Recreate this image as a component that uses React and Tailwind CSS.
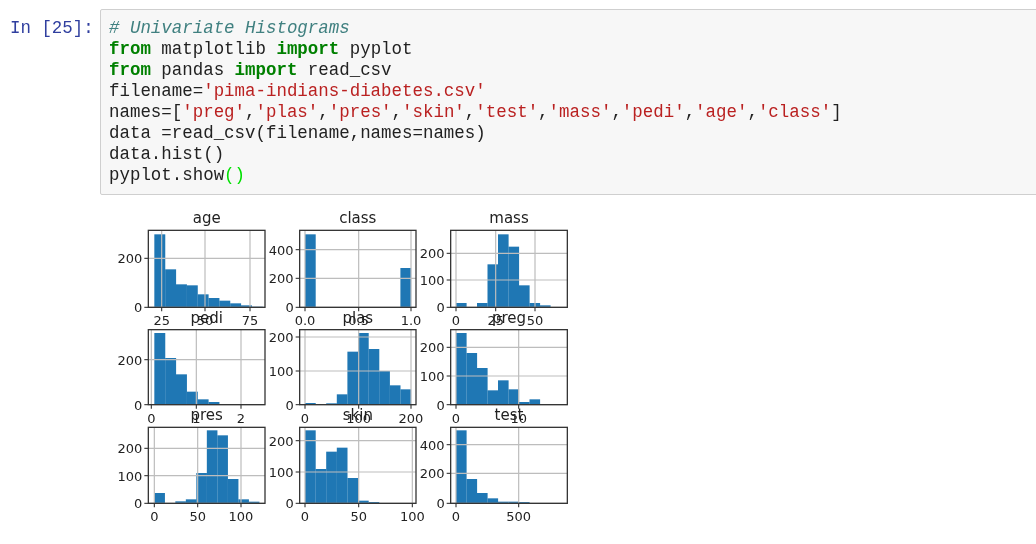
import React from 'react';

// all chart numbers are measured on a 3x crop, hence the /3 below
const charts = [
  { title: 'age', ox: 110, oy: 205, box: [115, 465, 73, 304], start: 133, w: 32.5,
    tops: [85, 190, 235, 238, 265, 276, 284, 292, 298, 302],
    xt: [['25', 155], ['50', 285], ['75', 420]], yt: [['200', 157], ['0', 304]] },
  { title: 'class', ox: 110, oy: 205, box: [569, 918, 73, 304], start: 585, w: 31.8,
    tops: [85, 304, 304, 304, 304, 304, 304, 304, 304, 186],
    xt: [['0.0', 585], ['0.5', 746], ['1.0', 903]], yt: [['400', 131], ['200', 217], ['0', 304]] },
  { title: 'mass', ox: 340, oy: 205, box: [332, 682, 73, 304], start: 348, w: 31.5,
    tops: [291, 304, 291, 175, 85, 122, 238, 291, 298, 303],
    xt: [['0', 348], ['25', 467], ['50', 585]], yt: [['200', 142], ['100', 222], ['0', 304]] },
  { title: 'pedi', ox: 110, oy: 305, box: [115, 465, 71, 296], start: 133, w: 32.5,
    tops: [81, 156, 205, 257, 280, 288, 296, 296, 296, 295],
    xt: [['0', 124], ['1', 259], ['2', 393]], yt: [['200', 161], ['0', 296]] },
  { title: 'plas', ox: 110, oy: 305, box: [569, 918, 71, 296], start: 585, w: 31.8,
    tops: [291, 296, 292, 265, 137, 81, 129, 195, 238, 250],
    xt: [['0', 585], ['100', 746], ['200', 903]], yt: [['200', 93], ['100', 195], ['0', 296]] },
  { title: 'preg', ox: 340, oy: 305, box: [332, 682, 71, 296], start: 348, w: 31.5,
    tops: [81, 141, 186, 253, 223, 250, 288, 280, 296, 296],
    xt: [['0', 348], ['10', 536]], yt: [['200', 124], ['100', 210], ['0', 296]] },
  { title: 'pres', ox: 110, oy: 404, box: [115, 465, 67, 295], start: 133, w: 31.5,
    tops: [264, 295, 289, 283, 204, 76, 91, 222, 283, 290],
    xt: [['0', 133], ['50', 263], ['100', 393]], yt: [['200', 130], ['100', 212], ['0', 295]] },
  { title: 'skin', ox: 110, oy: 404, box: [569, 918, 67, 295], start: 585, w: 31.8,
    tops: [76, 192, 140, 128, 219, 287, 291, 295, 295, 295],
    xt: [['0', 585], ['50', 746], ['100', 907]], yt: [['200', 107], ['100', 201], ['0', 295]] },
  { title: 'test', ox: 340, oy: 404, box: [332, 682, 67, 295], start: 348, w: 31.5,
    tops: [76, 222, 264, 280, 290, 290, 291, 295, 295, 295],
    xt: [['0', 348], ['500', 536]], yt: [['400', 119], ['200', 205], ['0', 295]] },
];

const Hist = ({ c }) => {
  const [l, r, t, b] = c.box;
  const px = (v) => c.ox + v / 3;
  const py = (v) => c.oy + v / 3;
  const font = { fontFamily: 'DejaVu Sans, sans-serif' };
  return (
    <g style={font}>
      <rect x={px(l)} y={py(t)} width={(r - l) / 3} height={(b - t) / 3} fill="#fff" />
      {c.tops.map((top, i) => (
        top < b && (
          <rect key={i} x={px(c.start + i * c.w)} y={py(top)} width={c.w / 3 + 0.1} height={(b - top) / 3} fill="#1f77b4" />
        )
      ))}
      {/* grid sits over the bars */}
      {c.xt.map(([label, x]) => (
        <line key={label} x1={px(x)} x2={px(x)} y1={py(t)} y2={py(b)} stroke="#bdbdbd" strokeWidth="1.2" />
      ))}
      {c.yt.map(([label, y]) => (
        <line key={label} x1={px(l)} x2={px(r)} y1={py(y)} y2={py(y)} stroke="#bdbdbd" strokeWidth="1.2" />
      ))}
      <rect x={px(l)} y={py(t)} width={(r - l) / 3} height={(b - t) / 3} fill="none" stroke="#333" strokeWidth="1.3" />
      {c.xt.map(([label, x]) => (
        <g key={label}>
          <line x1={px(x)} x2={px(x)} y1={py(b)} y2={py(b) + 4} stroke="#333" strokeWidth="1.1" />
          <text x={px(x)} y={py(b) + 18} textAnchor="middle" fontSize="13" fill="#222">{label}</text>
        </g>
      ))}
      {c.yt.map(([label, y]) => (
        <g key={label}>
          <line x1={px(l) - 4} x2={px(l)} y1={py(y)} y2={py(y)} stroke="#333" strokeWidth="1.1" />
          <text x={px(l) - 6} y={py(y) + 5} textAnchor="end" fontSize="13" fill="#222">{label}</text>
        </g>
      ))}
      <text x={(px(l) + px(r)) / 2} y={py(t) - 7} textAnchor="middle" fontSize="15" fill="#222">{c.title}</text>
    </g>
  );
};

const Kw = ({ children }) => <span className="font-bold text-[#008000]">{children}</span>;
const Str = ({ children }) => <span className="text-[#ba2121]">{children}</span>;

const App = () => {
  return (
    <div className="w-[1036px] h-[544px] overflow-hidden bg-white font-['Liberation_Mono',monospace] text-[17.45px] leading-[21px] text-[#222]">
      <div className="flex pt-[9px]">
        <div className="w-[100px] shrink-0 pl-[10px] pt-[9px] text-[#303f9f] blur-[0.25px]">In&nbsp;[25]:</div>
        <div className="flex-1 mr-[-4px] bg-[#f7f7f7] border border-[#cfcfcf] rounded-[2px] px-2 py-2 whitespace-pre">
          <div className="blur-[0.25px]">
            <div className="italic text-[#408080]"># Univariate Histograms</div>
            <div><Kw>from</Kw> matplotlib <Kw>import</Kw> pyplot</div>
            <div><Kw>from</Kw> pandas <Kw>import</Kw> read_csv</div>
            <div>filename=<Str>'pima-indians-diabetes.csv'</Str></div>
            <div>names=[<Str>'preg'</Str>,<Str>'plas'</Str>,<Str>'pres'</Str>,<Str>'skin'</Str>,<Str>'test'</Str>,<Str>'mass'</Str>,<Str>'pedi'</Str>,<Str>'age'</Str>,<Str>'class'</Str>]</div>
            <div>data =read_csv(filename,names=names)</div>
            <div>data.hist()</div>
            <div>pyplot.show<span className="text-[#00e000]">()</span></div>
          </div>
        </div>
      </div>

      {/* matplotlib output */}
      <svg viewBox="100 205 480 330" width="480" height="330" className="block ml-[100px] mt-[11px] blur-[0.5px]">
        {charts.map((c) => <Hist key={c.title} c={c} />)}
      </svg>
    </div>
  );
};

export default App;
